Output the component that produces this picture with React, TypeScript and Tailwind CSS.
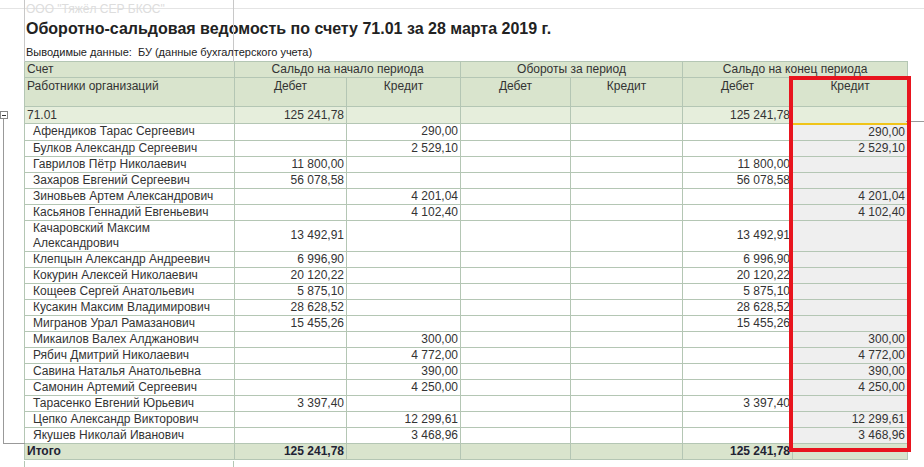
import React from "react";

const rows: [string, string, string, string, string][] = [
  ["Афендиков Тарас Сергеевич", "", "290,00", "", "290,00"],
  ["Булков Александр Сергеевич", "", "2 529,10", "", "2 529,10"],
  ["Гаврилов Пётр Николаевич", "11 800,00", "", "11 800,00", ""],
  ["Захаров Евгений Сергеевич", "56 078,58", "", "56 078,58", ""],
  ["Зиновьев Артем Александрович", "", "4 201,04", "", "4 201,04"],
  ["Касьянов Геннадий Евгеньевич", "", "4 102,40", "", "4 102,40"],
  ["Качаровский Максим Александрович", "13 492,91", "", "13 492,91", ""],
  ["Клепцын Александр Андреевич", "6 996,90", "", "6 996,90", ""],
  ["Кокурин Алексей Николаевич", "20 120,22", "", "20 120,22", ""],
  ["Кощеев Сергей Анатольевич", "5 875,10", "", "5 875,10", ""],
  ["Кусакин Максим Владимирович", "28 628,52", "", "28 628,52", ""],
  ["Мигранов Урал Рамазанович", "15 455,26", "", "15 455,26", ""],
  ["Микаилов Валех Алджанович", "", "300,00", "", "300,00"],
  ["Рябич Дмитрий Николаевич", "", "4 772,00", "", "4 772,00"],
  ["Савина Наталья Анатольевна", "", "390,00", "", "390,00"],
  ["Самонин Артемий Сергеевич", "", "4 250,00", "", "4 250,00"],
  ["Тарасенко Евгений Юрьевич", "3 397,40", "", "3 397,40", ""],
  ["Цепко Александр Викторович", "", "12 299,61", "", "12 299,61"],
  ["Якушев Николай Иванович", "", "3 468,96", "", "3 468,96"],
];

const b = "border border-[#b4c6b4]";

export default function App() {
  return (
    <div className="relative w-[924px] h-[467px] bg-white overflow-hidden text-[#333] text-[12px] leading-[15px]" style={{ fontFamily: '"Liberation Sans", Arial, sans-serif' }}>
      <div className="absolute left-0 top-[8px] w-[924px] border-t border-[#e4e4e4]" />
      <div className="absolute left-[24px] top-0 h-[62px] border-l border-[#c8c8c8]" />
      <div className="absolute left-[233px] top-0 h-[62px] border-l border-[#c8c8c8]" />
      <div className="absolute left-[3px] top-[117px] h-[327px] border-l border-[#999]" />
      <div className="absolute left-[3px] top-[443px] w-[22px] border-t border-[#999]" />
      <div className="absolute left-0 top-[111px] w-[8px] h-[8px] border border-[#888] bg-white flex items-center justify-center">
        <div className="w-[4px] border-t border-[#333]" />
      </div>
      <div className="absolute left-[26px] top-[2px] text-[#ddd] text-[12px]">ООО "Тяжёл СЕР БКОС"</div>
      <div className="pl-[26px] pt-[19px]">
        <div className="text-[16px] leading-[20px] font-bold text-[#222]">Оборотно-сальдовая ведомость по счету 71.01 за 28 марта 2019 г.</div>
        <div className="text-[11px] leading-[14px] mt-[6px] text-[#222]">Выводимые данные:&nbsp; БУ (данные бухгалтерского учета)</div>
      </div>
      <table className="ml-[24px] mt-[2px] border-collapse table-fixed" style={{ width: 883 }}>
        <colgroup>
          <col style={{ width: 210 }} /><col style={{ width: 112 }} /><col style={{ width: 114 }} /><col style={{ width: 110 }} /><col style={{ width: 112 }} /><col style={{ width: 110 }} /><col style={{ width: 115 }} />
        </colgroup>
        <thead className="bg-[#d9e4cd]">
          <tr className="h-[16px]">
            <td className={`${b} px-[2px]`}>Счет</td>
            <td colSpan={2} className={`${b} text-center`}>Сальдо на начало периода</td>
            <td colSpan={2} className={`${b} text-center`}>Обороты за период</td>
            <td colSpan={2} className={`${b} text-center`}>Сальдо на конец периода</td>
          </tr>
          <tr className="h-[29px] align-top">
            <td className={`${b} px-[2px] pt-[1px]`}>Работники организаций</td>
            {["Дебет", "Кредит", "Дебет", "Кредит", "Дебет", "Кредит"].map((t, i) => (
              <td key={i} className={`${b} text-center pt-[1px]`}>{t}</td>
            ))}
          </tr>
        </thead>
        <tbody>
          <tr className="h-[17px] bg-[#e6eedc]">
            <td className={`${b} px-[2px]`}>71.01</td>
            <td className={`${b} text-right pr-[2px]`}>125 241,78</td>
            <td className={b} /><td className={b} /><td className={b} />
            <td className={`${b} text-right pr-[2px]`}>125 241,78</td>
            <td className={`${b} border-b-2 border-b-[#f0c419]`} />
          </tr>
          {rows.map((r, i) => (
            <tr key={i} className="h-[16px]">
              <td className={`${b} pl-[8px] pr-[2px]`}>{r[0]}</td>
              <td className={`${b} text-right pr-[2px]`}>{r[1]}</td>
              <td className={`${b} text-right pr-[2px]`}>{r[2]}</td>
              <td className={b} /><td className={b} />
              <td className={`${b} text-right pr-[2px]`}>{r[3]}</td>
              <td className={`${b} text-right pr-[2px] bg-[#efefef]`}>{r[4]}</td>
            </tr>
          ))}
          <tr className="h-[16px] bg-[#d9e4cd] font-bold text-[#223]">
            <td className={`${b} px-[2px]`}>Итого</td>
            <td className={`${b} text-right pr-[2px]`}>125 241,78</td>
            <td className={b} /><td className={b} /><td className={b} />
            <td className={`${b} text-right pr-[2px]`}>125 241,78</td>
            <td className={b} />
          </tr>
        </tbody>
      </table>
      <div className="absolute left-[24px] top-[461px] h-[6px] border-l border-[#b4c6b4]" />
      <div className="absolute left-[233px] top-[461px] h-[6px] border-l border-[#b4c6b4]" />
      <div className="absolute left-[906px] top-[121px] w-[18px] border-t border-[#999]" />
      <div className="absolute left-[789px] top-[76px] w-[122px] h-[376px] border-[4px] border-[#e8141e]" />
    </div>
  );
}
